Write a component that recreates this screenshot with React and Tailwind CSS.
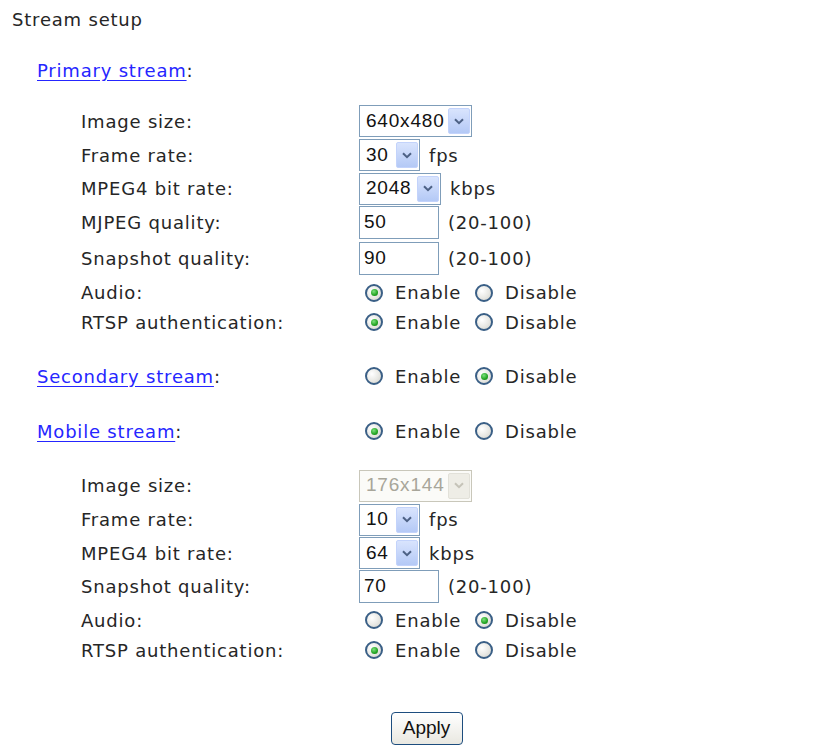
import React from "react";

const font = "font-['DejaVu_Sans',Verdana,sans-serif]";
const ctlFont = "font-['Liberation_Sans',Arial,sans-serif]";

const Chevron = ({ color = "#4d6185" }) => (
  <svg width="10" height="7" viewBox="0 0 10 7">
    <path d="M1 1.2 L5 5.2 L9 1.2" fill="none" stroke={color} strokeWidth="2" />
  </svg>
);

const Select = ({ value, w, disabled }) => (
  <div
    className={`${w} h-[32px] flex items-center border ${
      disabled ? "border-[#c9c7ba] bg-[#fbfbf8]" : "border-[#7f9db9] bg-white"
    }`}
  >
    <span
      className={`flex-1 pl-[6px] text-[19px] ${ctlFont} ${
        disabled ? "text-[#a8a69a]" : "text-[#111]"
      }`}
    >
      {value}
    </span>
    <div
      className={`w-[22px] h-[26px] mr-[1px] rounded-[2px] flex items-center justify-center ${
        disabled
          ? "bg-[#eeede6] border border-[#e2e1d9]"
          : "bg-gradient-to-b from-[#d9e4fd] to-[#b4c9f6] border border-[#c3d3fb]"
      }`}
    >
      <Chevron color={disabled ? "#c5c3b8" : "#4d6185"} />
    </div>
  </div>
);

const Input = ({ value }) => (
  <div className="w-[80px] h-[33px] border border-[#7f9db9] bg-white flex items-center">
    <span className={`pl-[4px] text-[19px] text-[#111] ${ctlFont}`}>{value}</span>
  </div>
);

const Radio = ({ checked }) => (
  <span className="w-[18px] h-[18px] rounded-full border-[2px] border-[#3a5f86] bg-[radial-gradient(circle_at_35%_35%,#ffffff_0%,#e8e8e4_55%,#cfcfc8_100%)] flex items-center justify-center">
    {checked && (
      <span className="w-[7px] h-[7px] rounded-full bg-[radial-gradient(circle_at_40%_35%,#7de07d_0%,#22a322_60%,#137a13_100%)]" />
    )}
  </span>
);

const EnableDisable = ({ on }) => (
  <div className="flex items-center pl-[6px]">
    <Radio checked={on} />
    <span className="ml-[12px] w-[64px]">Enable</span>
    <span className="ml-[16px]">
      <Radio checked={!on} />
    </span>
    <span className="ml-[12px]">Disable</span>
  </div>
);

const Row = ({ h, label, children }) => (
  <div className={`flex items-center ${h}`}>
    <div className="w-[359px] pl-[81px] shrink-0">{label}</div>
    <div className="flex items-center">{children}</div>
  </div>
);

const Section = ({ h, title, children }) => (
  <div className={`flex items-center ${h}`}>
    <div className="w-[359px] pl-[37px] shrink-0">
      <a href="#" className="text-[#2525ff] underline underline-offset-[3px]">
        {title}
      </a>
      :
    </div>
    <div className="flex items-center">{children}</div>
  </div>
);

const Suffix = ({ children }) => <span className="ml-[9px]">{children}</span>;

export default function App() {
  return (
    <div className={`w-[832px] h-[754px] bg-white text-[#262626] text-[18px] tracking-[0.8px] ${font}`}>
      <div className="h-[38px] pl-[12px] flex items-center">Stream setup</div>
      <div className="h-[14px]" />
      <Section h="h-[36px]" title="Primary stream" />
      <div className="h-[16px]" />
      <Row h="h-[34px]" label="Image size:">
        <Select value="640x480" w="w-[113px]" />
      </Row>
      <Row h="h-[34px]" label="Frame rate:">
        <Select value="30" w="w-[61px]" />
        <Suffix>fps</Suffix>
      </Row>
      <Row h="h-[33px]" label="MPEG4 bit rate:">
        <Select value="2048" w="w-[82px]" />
        <Suffix>kbps</Suffix>
      </Row>
      <Row h="h-[35px]" label="MJPEG quality:">
        <Input value="50" />
        <Suffix>(20-100)</Suffix>
      </Row>
      <Row h="h-[37px]" label="Snapshot quality:">
        <Input value="90" />
        <Suffix>(20-100)</Suffix>
      </Row>
      <Row h="h-[31px]" label="Audio:">
        <EnableDisable on />
      </Row>
      <Row h="h-[28px]" label="RTSP authentication:">
        <EnableDisable on />
      </Row>
      <div className="h-[22px]" />
      <Section h="h-[36px]" title="Secondary stream">
        <EnableDisable on={false} />
      </Section>
      <div className="h-[19px]" />
      <Section h="h-[36px]" title="Mobile stream">
        <EnableDisable on />
      </Section>
      <div className="h-[20px]" />
      <Row h="h-[33px]" label="Image size:">
        <Select value="176x144" w="w-[113px]" disabled />
      </Row>
      <Row h="h-[35px]" label="Frame rate:">
        <Select value="10" w="w-[61px]" />
        <Suffix>fps</Suffix>
      </Row>
      <Row h="h-[32px]" label="MPEG4 bit rate:">
        <Select value="64" w="w-[61px]" />
        <Suffix>kbps</Suffix>
      </Row>
      <Row h="h-[35px]" label="Snapshot quality:">
        <Input value="70" />
        <Suffix>(20-100)</Suffix>
      </Row>
      <Row h="h-[32px]" label="Audio:">
        <EnableDisable on={false} />
      </Row>
      <Row h="h-[28px]" label="RTSP authentication:">
        <EnableDisable on />
      </Row>
      <div className="h-[48px]" />
      <div className="flex justify-center pl-[21px]">
        <button
          className={`w-[72px] h-[33px] rounded-[4px] border border-[#1d4d7e] bg-gradient-to-b from-white to-[#e9e8e1] text-[19px] tracking-normal text-[#111] ${ctlFont}`}
        >
          Apply
        </button>
      </div>
    </div>
  );
}
